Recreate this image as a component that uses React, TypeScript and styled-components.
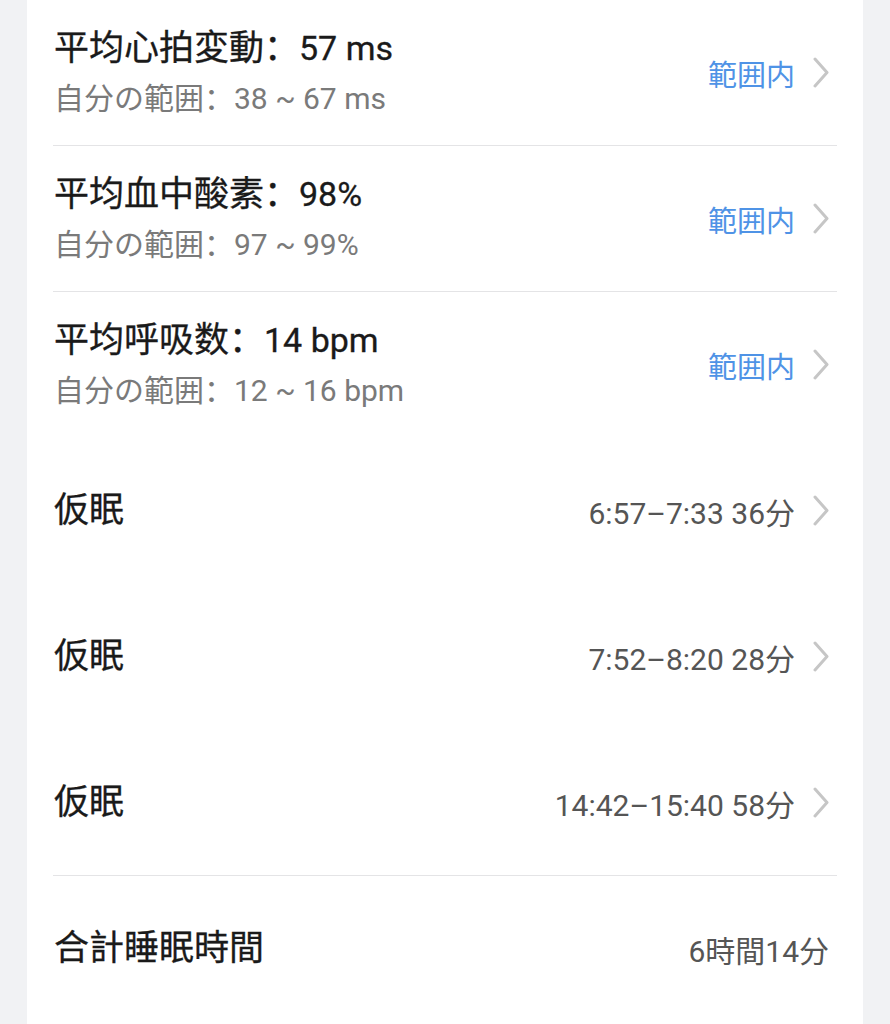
import styled, { createGlobalStyle } from "styled-components";

const GlobalStyle = createGlobalStyle`
  html, body {
    margin: 0;
    padding: 0;
    background: #f1f2f4;
  }
  body {
    font-family: Roboto, "Noto Sans CJK SC", "Noto Sans CJK JP", sans-serif;
  }
`;

interface Metric {
  label: string;
  value: string;
  range: string;
}

const metrics: Metric[] = [
  { label: "平均心拍変動：", value: "57 ms", range: "38 ~ 67 ms" },
  { label: "平均血中酸素：", value: "98%", range: "97 ~ 99%" },
  { label: "平均呼吸数：", value: "14 bpm", range: "12 ~ 16 bpm" },
];

const naps = ["6:57–7:33 36分", "7:52–8:20 28分", "14:42–15:40 58分"];

function Chevron() {
  return (
    <ChevronIcon viewBox="0 0 16 31" width="16" height="31">
      <polyline points="2,2 14,15.5 2,29" fill="none" stroke="#c6c6c6" strokeWidth="3" strokeLinecap="round" strokeLinejoin="round" />
    </ChevronIcon>
  );
}

export default function App() {
  return (
    <>
      <GlobalStyle />
      <Page>
        <Card>
          {metrics.map((m, i) => (
            <Row key={m.label} divided={i < 2}>
              <Info>
                <Title>
                  {m.label}
                  <Num>{m.value}</Num>
                </Title>
                <Sub>自分の範囲：{m.range}</Sub>
              </Info>
              <Right>
                <Status>範囲内</Status>
                <Chevron />
              </Right>
            </Row>
          ))}
          {naps.map((t, i) => (
            <Row key={t} divided={i === naps.length - 1}>
              <Title>仮眠</Title>
              <Right>
                <Value>{t}</Value>
                <Chevron />
              </Right>
            </Row>
          ))}
          <Row divided={false}>
            <Title>合計睡眠時間</Title>
            <Right>
              <Value>6時間14分</Value>
            </Right>
          </Row>
        </Card>
      </Page>
    </>
  );
}

const Page = styled.div`
  padding: 0 27px;
  height: 1024px;
  overflow: hidden;
`;

const Card = styled.div`
  background: #ffffff;
  min-height: 1024px;
  padding: 0 26px;
`;

const Row = styled.div<{ divided: boolean }>`
  display: flex;
  align-items: center;
  justify-content: space-between;
  height: 145px;
  padding: 0 8px 0 1px;
  border-bottom: 1px solid ${(p) => (p.divided ? "#e4e4e6" : "transparent")};
`;

const Info = styled.div`
  display: flex;
  flex-direction: column;
  gap: 8px;
`;

const Title = styled.div`
  font-size: 35px;
  line-height: 44px;
  color: #1a1a1a;
  font-weight: 400;
  -webkit-text-stroke: 0.3px #1a1a1a;
`;

const Num = styled.span`
  font-size: 34px;
`;

const Sub = styled.div`
  font-size: 30px;
  line-height: 40px;
  color: #7a7a7a;
`;

const Right = styled.div`
  display: flex;
  align-items: center;
  gap: 18px;
`;

const Status = styled.span`
  font-size: 29px;
  color: #4f93e6;
`;

const Value = styled.span`
  font-size: 30px;
  color: #555555;
`;

const ChevronIcon = styled.svg`
  display: block;
`;
